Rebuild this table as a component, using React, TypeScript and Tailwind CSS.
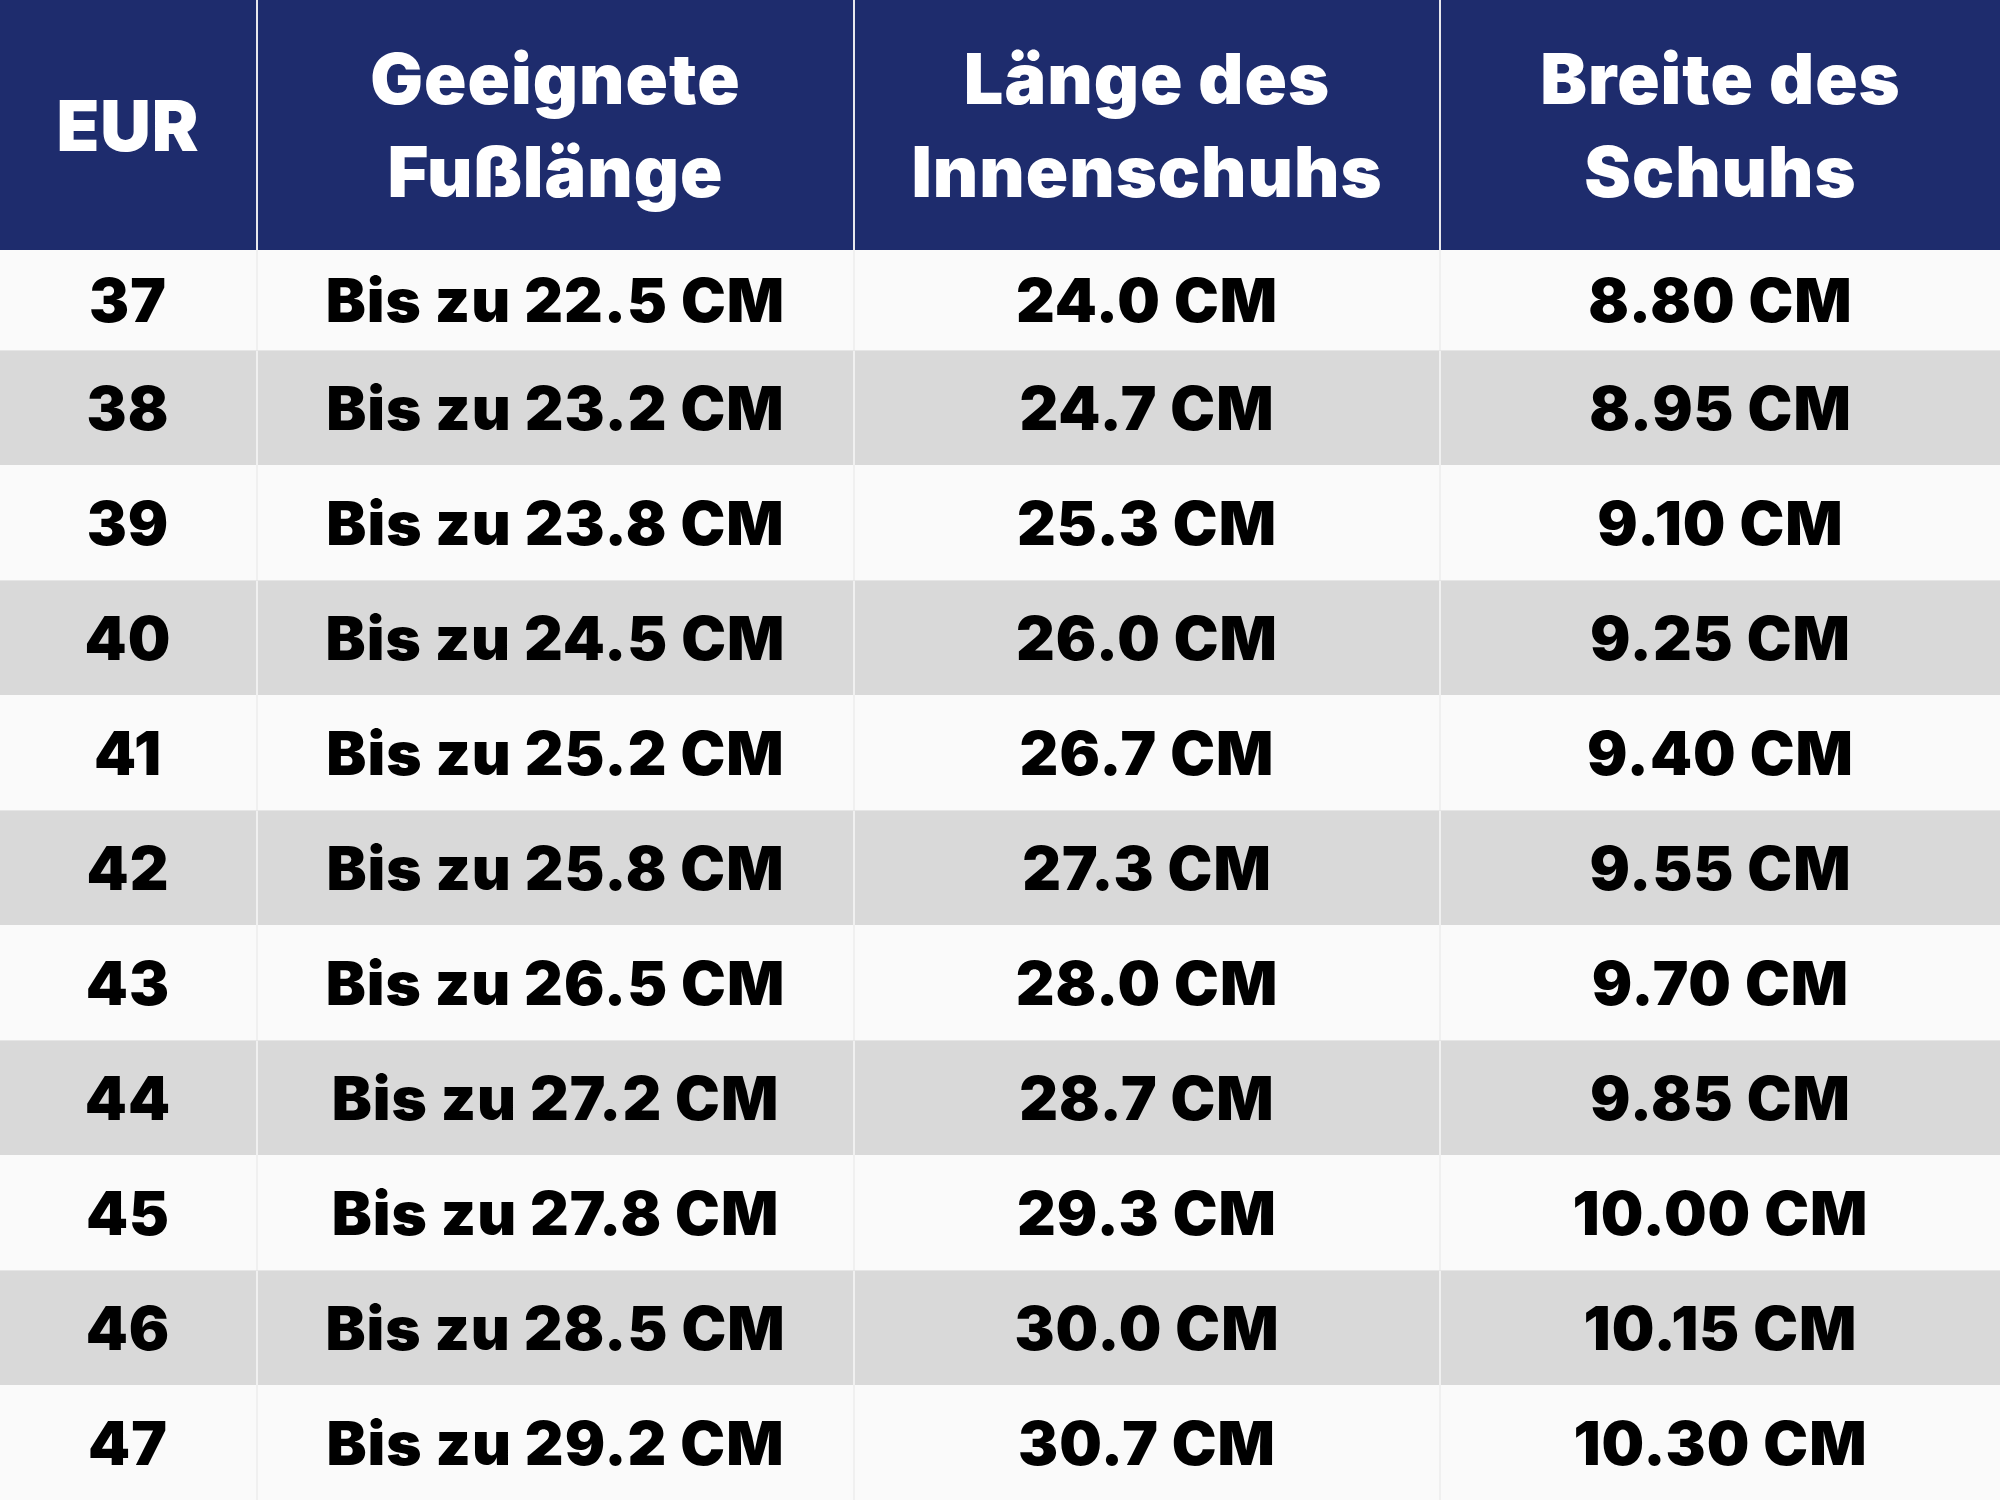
const headers = [
  ['EUR'],
  ['Geeignete', 'Fußlänge'],
  ['Länge des', 'Innenschuhs'],
  ['Breite des', 'Schuhs'],
];

const rows = [
  ['37', 'Bis zu 22.5 CM', '24.0 CM', '8.80 CM'],
  ['38', 'Bis zu 23.2 CM', '24.7 CM', '8.95 CM'],
  ['39', 'Bis zu 23.8 CM', '25.3 CM', '9.10 CM'],
  ['40', 'Bis zu 24.5 CM', '26.0 CM', '9.25 CM'],
  ['41', 'Bis zu 25.2 CM', '26.7 CM', '9.40 CM'],
  ['42', 'Bis zu 25.8 CM', '27.3 CM', '9.55 CM'],
  ['43', 'Bis zu 26.5 CM', '28.0 CM', '9.70 CM'],
  ['44', 'Bis zu 27.2 CM', '28.7 CM', '9.85 CM'],
  ['45', 'Bis zu 27.8 CM', '29.3 CM', '10.00 CM'],
  ['46', 'Bis zu 28.5 CM', '30.0 CM', '10.15 CM'],
  ['47', 'Bis zu 29.2 CM', '30.7 CM', '10.30 CM'],
];

export default function App() {
  return (
    <div className="w-[2000px] h-[1500px] overflow-hidden bg-[#fafafa] font-['Inter',sans-serif]">
      {/* header */}
      <div className="grid grid-cols-[256px_597px_586px_1fr] h-[250px] bg-[#1e2c6d]">
        {headers.map((lines, i) => (
          <div
            key={i}
            className={`flex flex-col items-center justify-center text-white font-black text-[70px] leading-[93px] tracking-[1px] ${
              i > 0 ? 'border-l-2 border-[#e8e8ee]' : ''
            }`}
          >
            {lines.map((l) => (
              <span key={l}>{l}</span>
            ))}
          </div>
        ))}
      </div>

      {/* body rows */}
      {rows.map((r, ri) => (
        <div
          key={r[0]}
          className={`grid grid-cols-[256px_597px_586px_1fr] ${ri === 0 ? 'h-[100px]' : 'h-[115px]'} ${
            ri % 2 === 1 ? 'bg-[#d9d9d9] border-t border-[#e6e6e6]' : 'bg-[#fafafa]'
          }`}
        >
          {r.map((c, ci) => (
            <div
              key={ci}
              className={`flex items-center justify-center text-black font-black text-[60px] tracking-[1px] ${
                ci > 0 ? 'border-l-2 border-[#f0f0f0]' : ''
              }`}
            >
              {c}
            </div>
          ))}
        </div>
      ))}
    </div>
  );
}
